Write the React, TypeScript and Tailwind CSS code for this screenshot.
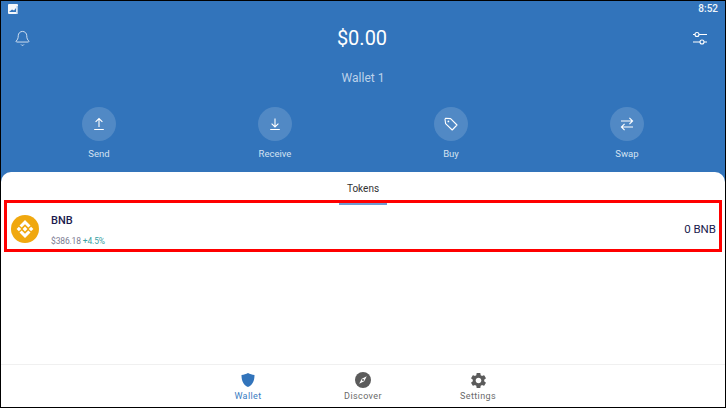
import { Bell } from "lucide-react";
import { MdSettings } from "react-icons/md";

const actions = [
  { label: "Send", icon: <svg width="16" height="16" viewBox="0 0 16 16" fill="none" stroke="white" strokeWidth="1.1"><path d="M8 11V2.500M4.600 5.800 8 2.500l3.400 3.300M3.200 13.500h9.600" /></svg> },
  { label: "Receive", icon: <svg width="16" height="16" viewBox="0 0 16 16" fill="none" stroke="white" strokeWidth="1.1"><path d="M8 2.500V11M4.600 7.700 8 11l3.400-3.300M3.200 13.500h9.600" /></svg> },
  { label: "Buy", icon: <svg width="16" height="16" viewBox="0 0 16 16" fill="none" stroke="white" strokeWidth="1.1" strokeLinejoin="round"><path d="M2 3.200 2.600 2.200 7.600 2.600 14 9 9.200 14 2.600 7.600Z" /><circle cx="5.400" cy="5.400" r="0.9" fill="white" stroke="none" /></svg> },
  { label: "Swap", icon: <svg width="16" height="16" viewBox="0 0 16 16" fill="none" stroke="white" strokeWidth="1.1"><path d="M2 5h11.600M10.400 1.800 13.600 5l-3.200 3.200M14 11H2.400M5.600 7.800 2.400 11l3.200 3.200" /></svg> },
];

function BnbLogo() {
  return (
    <svg width="28" height="28" viewBox="0 0 28 28" className="-mt-[2px]">
      <circle cx="14" cy="14" r="14" fill="#f0a80f" />
      <g fill="white">
        <path d="M14 5 19.500 10.500 17.300 12.500 14 9.300 10.700 12.500 8.500 10.500Z" />
        <path d="M14 23 8.500 17.500 10.700 15.500 14 18.700 17.300 15.500 19.500 17.500Z" />
        <path d="M14 11.600 16.400 14 14 16.400 11.600 14Z" />
        <path d="M7.900 11.700 10.200 14 7.900 16.300 5.600 14Z" />
        <path d="M20.100 11.700 22.400 14 20.100 16.300 17.800 14Z" />
      </g>
    </svg>
  );
}

export default function App() {
  return (
    <div className="relative flex h-[408px] w-[726px] flex-col overflow-hidden border border-black bg-[#3274bb] font-['Roboto',sans-serif]">
      <div className="flex h-[15px] items-center justify-between pl-[7px] pr-[7px] pt-[1px]">
        <svg width="10" height="10" viewBox="0 0 10 10">
          <rect width="10" height="10" rx="1" fill="#f4f7fb" />
          <path d="M1 8 4 5.500 6 6.500 8 4V8Z" fill="#3274bb" />
          <rect x="8.600" y="2" width="1.400" height="8" fill="#a9c5e4" />
        </svg>
        <span className="text-[10px] font-medium leading-none text-[#eef4fa]">8:52</span>
      </div>
      <div className="flex h-[44px] items-center justify-between pl-[13px] pr-[17px]">
        <Bell size={17} color="#e8f0f8" strokeWidth={1.2} />
        <span className="text-[20px] leading-none text-white">$0.00</span>
        <svg width="15" height="15" viewBox="0 0 15 15" fill="none" stroke="white" strokeWidth="1.1">
          <circle cx="4" cy="3.500" r="2" />
          <circle cx="9" cy="11" r="2" />
          <path d="M0 3.500H2M6 3.500H14M0 11H7M11 11H14" />
        </svg>
      </div>
      <div className="mt-[11px] text-center text-[12px] leading-[14px] text-[#bcd2ea]">Wallet 1</div>
      <div className="mt-[22px] grid grid-cols-4 px-[10px]">
        {actions.map((a) => (
          <div key={a.label} className="flex flex-col items-center">
            <div className="flex h-[34px] w-[34px] items-center justify-center rounded-full bg-[#5189c5]">{a.icon}</div>
            <span className="mt-[7px] text-[9.5px] leading-[12px] text-[#d3e2f2]">{a.label}</span>
          </div>
        ))}
      </div>
      <div className="mt-[12px] flex min-h-0 flex-1 flex-col rounded-t-[10px] bg-white">
        <div className="relative flex h-[33px] shrink-0 items-center justify-center text-[10px] text-[#333333]">
          Tokens
          <div className="absolute bottom-0 left-1/2 h-[2px] w-[48px] -translate-x-1/2 bg-[#6f9bd1]" />
        </div>
        <div className="flex h-[47px] shrink-0 items-center justify-between pl-[10px] pr-[9px] pt-[2px]">
          <div className="flex items-center gap-[12px]">
            <BnbLogo />
            <div className="flex flex-col">
              <span className="text-[11px] font-medium leading-[13px] text-[#1b1b4e]">BNB</span>
              <span className="mt-[9px] text-[8.5px] leading-[10px] tracking-[-0.15px] text-[#7d7d92]">
                $386.18 <span className="text-[#3c9fa3]">+4.5%</span>
              </span>
            </div>
          </div>
          <span className="mt-[1px] text-[11.5px] text-[#1b1b4e]">0 BNB</span>
        </div>
        <div className="flex-1" />
        <div className="grid h-[43px] grid-cols-[115px_115px_115px] justify-center border-t border-[#f0f0f0] pt-[7px]">
          <div className="flex flex-col items-center text-[#3a7cc2]">
            <svg width="16" height="16" viewBox="0 0 16 16"><path d="M8 1c2 1.200 4 1.800 6.500 2C14.500 9 12.500 13 8 15 3.500 13 1.500 9 1.500 3 4 2.800 6 2.200 8 1Z" fill="#3274bb" /></svg>
            <span className="mt-[3px] text-[9px] leading-[11px] tracking-[0.4px]">Wallet</span>
          </div>
          <div className="flex flex-col items-center text-[#6a6a6a]">
            <svg width="16" height="16" viewBox="0 0 16 16"><circle cx="8" cy="8" r="8" fill="#5b5b5b" /><path d="M11.800 4.200 9.200 9.200 4.200 11.800 6.800 6.800Z" fill="white" /><circle cx="8" cy="8" r="1" fill="#5b5b5b" /></svg>
            <span className="mt-[3px] text-[9px] leading-[11px] tracking-[0.4px]">Discover</span>
          </div>
          <div className="flex flex-col items-center text-[#6a6a6a]">
            <MdSettings size={19} color="#5b5b5b" className="-my-[1.5px]" />
            <span className="mt-[3px] text-[9px] leading-[11px] tracking-[0.4px]">Settings</span>
          </div>
        </div>
      </div>
      <div className="pointer-events-none absolute left-[3px] top-[199px] h-[52px] w-[718px] border-[3px] border-[#ff0000]" />
    </div>
  );
}
